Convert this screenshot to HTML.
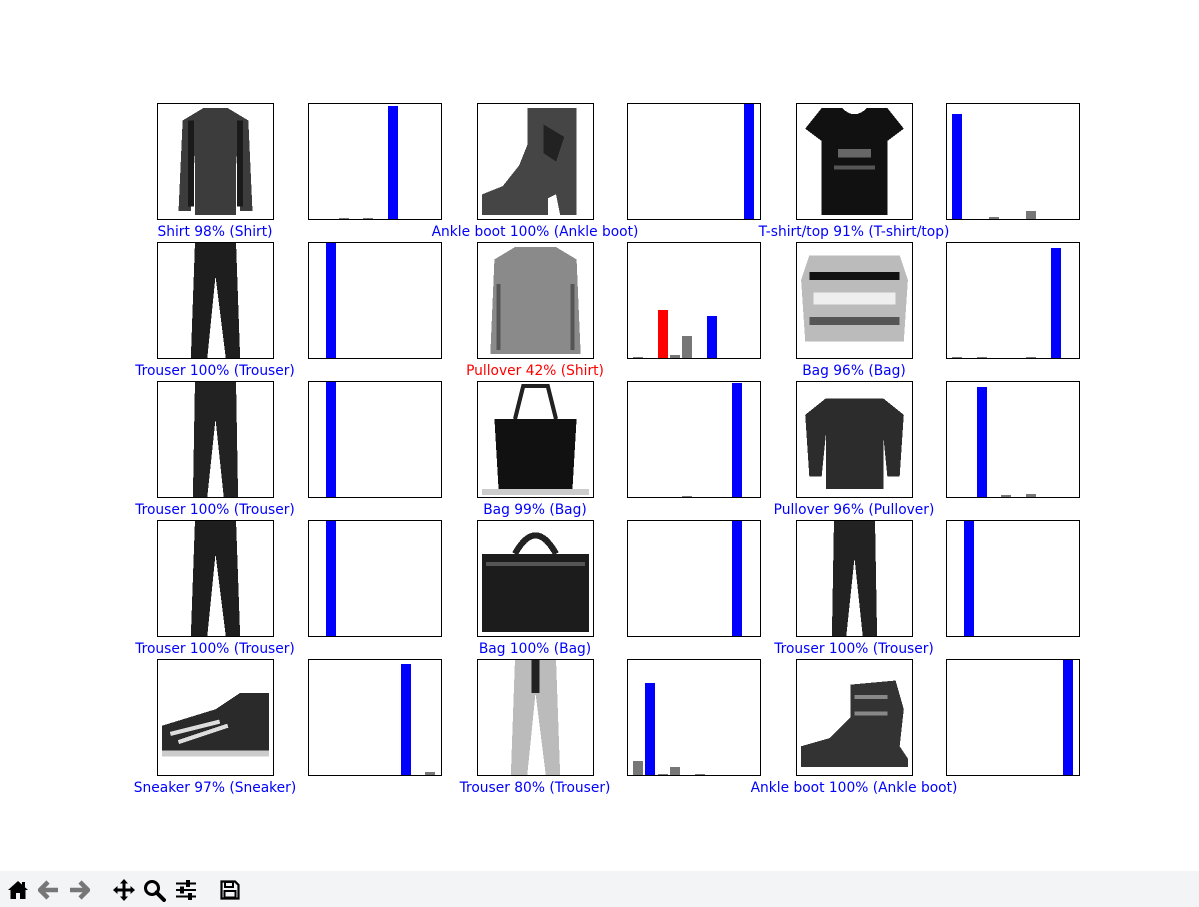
<!DOCTYPE html>
<html><head><meta charset="utf-8"><style>
html,body{margin:0;padding:0;background:#fff;width:1199px;height:907px;overflow:hidden;position:relative;font-family:"DejaVu Sans","Liberation Sans",sans-serif}
.ax{position:absolute;border:1px solid #000;box-sizing:border-box;background:#fff;overflow:hidden}
.bar{position:absolute;bottom:0}
.lbl{position:absolute;font-size:13.8px;white-space:nowrap;transform:translateX(-50%);line-height:15px}
.tb{position:absolute;left:0;top:871px;width:1199px;height:36px;background:#f3f4f6}
.tb svg{position:absolute}
</style></head><body>
<div id="root"></div>
<div class="tb">
<svg style="left:7px;top:9px" width="22" height="20" viewBox="0 0 22 20"><path d="M11 1 L1 10 L3.5 10 L3.5 19 L9 19 L9 13 L13 13 L13 19 L18.5 19 L18.5 10 L21 10 Z" fill="#000"/><rect x="15" y="2" width="3" height="5" fill="#000"/></svg>
<svg style="left:38px;top:9px" width="22" height="20" viewBox="0 0 22 20"><path d="M10 2 L2 10 L10 18 M2.5 10 L20 10" stroke="#777" stroke-width="4.5" fill="none" stroke-linejoin="round"/></svg>
<svg style="left:68px;top:9px" width="22" height="20" viewBox="0 0 22 20"><path d="M12 2 L20 10 L12 18 M19.5 10 L2 10" stroke="#777" stroke-width="4.5" fill="none" stroke-linejoin="round"/></svg>
<svg style="left:112px;top:7px" width="24" height="24" viewBox="0 0 24 24"><path d="M12 1 L16 5.5 L13.5 5.5 L13.5 10.5 L18.5 10.5 L18.5 8 L23 12 L18.5 16 L18.5 13.5 L13.5 13.5 L13.5 18.5 L16 18.5 L12 23 L8 18.5 L10.5 18.5 L10.5 13.5 L5.5 13.5 L5.5 16 L1 12 L5.5 8 L5.5 10.5 L10.5 10.5 L10.5 5.5 L8 5.5 Z" fill="#000"/></svg>
<svg style="left:143px;top:8px" width="23" height="23" viewBox="0 0 23 23"><circle cx="9" cy="9" r="6.5" stroke="#000" stroke-width="3" fill="none"/><path d="M13.5 13.5 L21 21" stroke="#000" stroke-width="4" stroke-linecap="round"/></svg>
<svg style="left:175px;top:9px" width="22" height="20" viewBox="0 0 22 20"><g fill="#000"><rect x="1" y="2.5" width="20" height="2"/><rect x="1" y="9" width="20" height="2"/><rect x="1" y="15.5" width="20" height="2"/><rect x="11" y="0" width="4" height="7"/><rect x="5" y="6.5" width="4" height="7"/><rect x="13" y="13" width="4" height="7"/></g></svg>
<svg style="left:220px;top:9px" width="20" height="20" viewBox="0 0 20 20"><path d="M1.5 1.5 H15 L18.5 5 V18.5 H1.5 Z" stroke="#000" stroke-width="2.2" fill="none"/><rect x="5" y="2" width="8" height="5" stroke="#000" stroke-width="2" fill="none"/><rect x="4.5" y="11" width="11" height="6.5" stroke="#000" stroke-width="2" fill="none"/></svg>
</div>
<script>
var colsImg=[157,477,796], colsBar=[308,627,946], rows=[103,242,381,520,659];
var shapes={
shirt:'<path d="M11 1 L17 1 L22 4 L23 26 L20 26 L19 12 L19 27 L9 27 L9 12 L8 26 L5 26 L6 4 Z" fill="#3c3c3c"/><path d="M8 4 L8 25 M20 4 L20 25" stroke="#1a1a1a" stroke-width="1.5"/>',
boot:'<path d="M12 1 L24 1 L24 27 L20 27 L19 22 L17 23 L17 27 L1 27 L1 22 L6 20 L10 15 L12 10 Z" fill="#454545"/><path d="M16 5 L21 8 L19 14 L16 12Z" fill="#222"/>',
tee:'<path d="M6 1 L11 1 Q14 4 17 1 L22 1 L26 6 L22 9 L22 27 L6 27 L6 9 L2 6 Z" fill="#111"/><rect x="10" y="11" width="8" height="2" fill="#666"/><rect x="9" y="15" width="10" height="1" fill="#555"/>',
trouser:'<path d="M9 0 L19 0 L20 28 L16.5 28 L14 8 L12 28 L8 28 Z" fill="#1e1e1e"/>',
trouser2:'<path d="M9 0 L19 0 L19.5 28 L16 28 L14 9 L12 28 L8.5 28 Z" fill="#222"/>',
trouserL:'<path d="M9 0 L19 0 L20 28 L16.5 28 L14 8 L12 28 L8 28 Z" fill="#bbb"/><rect x="13" y="0" width="2" height="8" fill="#222"/>',
pullL:'<path d="M9 1 L19 1 L24 4 L25 27 L3 27 L4 4 Z" fill="#8a8a8a"/><path d="M5 10 L5 26 M23 10 L23 26" stroke="#555" stroke-width="1"/>',
pullD:'<path d="M7 4 L21 4 L26 8 L25 23 L22 23 L21 13 L21 26 L7 26 L7 13 L6 23 L3 23 L2 8 Z" fill="#2c2c2c"/>',
bagL:'<path d="M1 9 L3 3 L25 3 L27 9 L26 24 L2 24 Z" fill="#bbb"/><rect x="3" y="7" width="22" height="2" fill="#111"/><rect x="4" y="12" width="20" height="3" fill="#eee"/><rect x="3" y="18" width="22" height="2" fill="#555"/>',
tote:'<path d="M9 9 L11 1 L17 1 L19 9" stroke="#222" stroke-width="1" fill="none"/><path d="M4 9 L24 9 L23 26 L5 26 Z" fill="#111"/><rect x="1" y="26" width="26" height="1.5" fill="#ccc"/>',
bagD:'<path d="M9 8 Q14 -1 19 8" stroke="#222" stroke-width="1.5" fill="none"/><path d="M1 8 L27 8 L27 27 L1 27 Z" fill="#1c1c1c"/><rect x="2" y="10" width="24" height="1" fill="#555"/>',
sneaker:'<path d="M1 16 L14 12 L20 8 L27 8 L27 22 L1 22 Z" fill="#2a2a2a"/><path d="M3 18 L15 15 M5 20 L17 16" stroke="#ddd" stroke-width="1"/><rect x="1" y="22" width="26" height="1.5" fill="#ccc"/>',
boot2:'<path d="M13 6 L24 5 L26 12 L25 21 L27 24 L27 26 L1 26 L1 21 L8 19 L13 14 Z" fill="#333"/><path d="M14 9 L22 9 M14 13 L22 13" stroke="#888" stroke-width="1"/>'
};
var data=[
['shirt','Shirt 98% (Shirt)','#0000ff',6,{6:.98,2:.01,4:.01},'b'],
['boot','Ankle boot 100% (Ankle boot)','#0000ff',9,{9:1},'b'],
['tee','T-shirt/top 91% (T-shirt/top)','#0000ff',0,{0:.91,3:.02,6:.07},'b'],
['trouser','Trouser 100% (Trouser)','#0000ff',1,{1:1},'b'],
['pullL','Pullover 42% (Shirt)','#ff0000',6,{0:.01,2:.42,3:.03,4:.19,6:.37},'r2'],
['bagL','Bag 96% (Bag)','#0000ff',8,{8:.96,0:.01,2:.01,6:.01},'b'],
['trouser2','Trouser 100% (Trouser)','#0000ff',1,{1:1},'b'],
['tote','Bag 99% (Bag)','#0000ff',8,{8:.99,4:.01},'b'],
['pullD','Pullover 96% (Pullover)','#0000ff',2,{2:.96,4:.015,6:.025},'b'],
['trouser','Trouser 100% (Trouser)','#0000ff',1,{1:1},'b'],
['bagD','Bag 100% (Bag)','#0000ff',8,{8:1},'b'],
['trouser2','Trouser 100% (Trouser)','#0000ff',1,{1:1},'b'],
['sneaker','Sneaker 97% (Sneaker)','#0000ff',7,{7:.97,9:.03},'b'],
['trouserL','Trouser 80% (Trouser)','#0000ff',1,{1:.8,0:.12,2:.01,3:.07,5:.01},'b'],
['boot2','Ankle boot 100% (Ankle boot)','#0000ff',9,{9:1},'b']
];
var h='';
data.forEach(function(d,k){
 var r=Math.floor(k/3),c=k%3,y=rows[r],xi=colsImg[c],xb=colsBar[c];
 h+='<div class="ax" style="left:'+xi+'px;top:'+y+'px;width:117px;height:117px"><svg width="115" height="115" viewBox="0 0 28 28" shape-rendering="crispEdges">'+shapes[d[0]]+'</svg></div>';
 h+='<div class="lbl" style="left:'+(xi+58)+'px;top:'+(y+122)+'px;color:'+d[2]+'">'+d[1]+'</div>';
 var bars='';
 for(var i in d[4]){i=+i;var v=d[4][i];var col='#777';
  if(i==d[3])col='#0000ff'; if(d[5]=='r2'&&i==2)col='#ff0000';
  var left=(i-0.4+0.87)/10.74*133-1;
  bars+='<div class="bar" style="left:'+left.toFixed(1)+'px;width:10px;height:'+Math.max(1,v*115).toFixed(1)+'px;background:'+col+'"></div>';}
 h+='<div class="ax" style="left:'+xb+'px;top:'+y+'px;width:134px;height:117px">'+bars+'</div>';
});
document.getElementById('root').innerHTML=h;
</script>
</body></html>
